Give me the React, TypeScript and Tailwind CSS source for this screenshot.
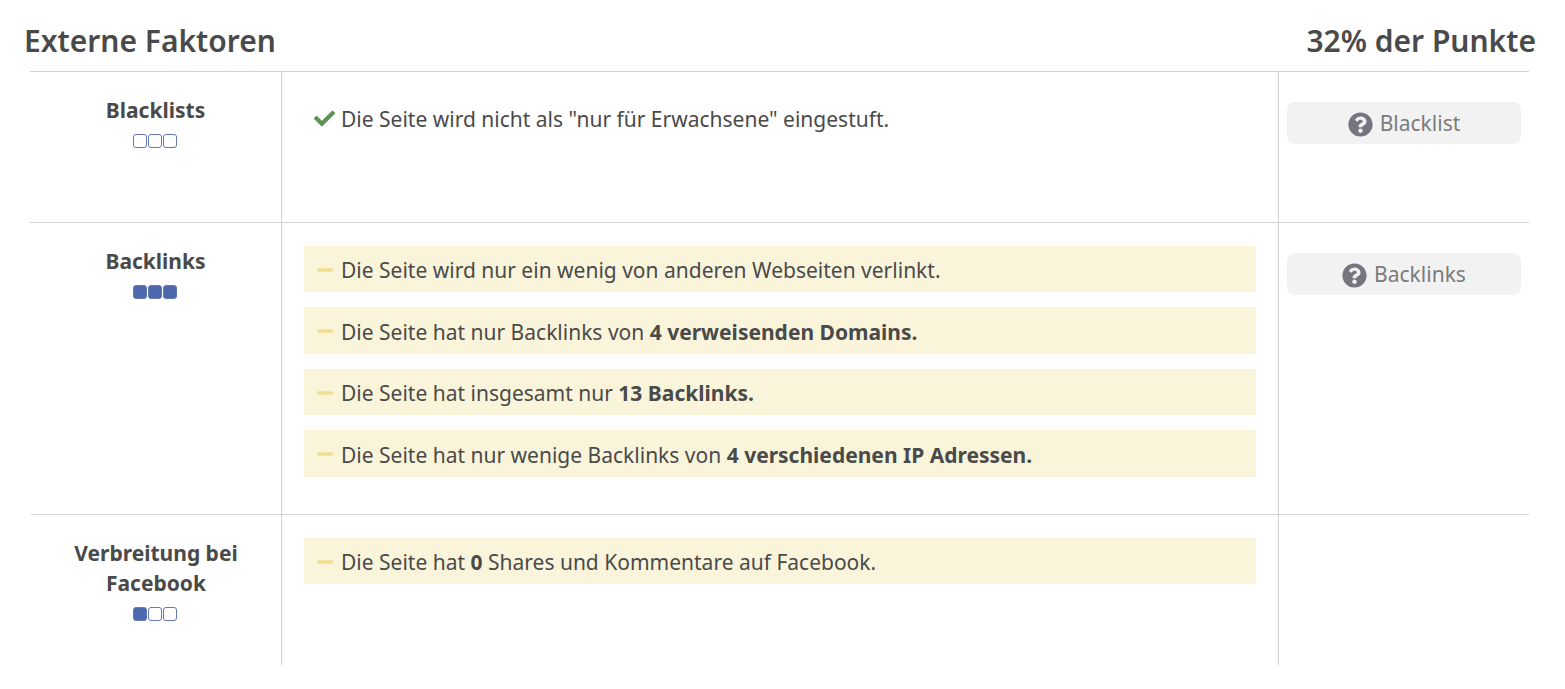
import { FaCheck, FaMinus, FaQuestionCircle } from 'react-icons/fa';

// Bewertungsquadrate unter dem Faktornamen
function Rating({ filled }: { filled: number }) {
  return (
    <div className="flex justify-center gap-px mt-[9px] -translate-x-px">
      {[0, 1, 2].map((i) => (
        <span
          key={i}
          className={`w-[14px] h-[14px] rounded-[3px] border border-[#6079b5] ${i < filled ? 'bg-[#4d69ae]' : 'bg-white'}`}
        />
      ))}
    </div>
  );
}

function Warning({ children }: { children: React.ReactNode }) {
  return (
    <div className="flex items-center h-[46.5px] mb-[15px] bg-[#faf5da] pl-[12px] text-[21px] text-[#4a4a4a]">
      <FaMinus className="w-[18px] h-[18px] mr-[7px] text-[#f0e08e] translate-y-px shrink-0" />
      <span className="translate-y-[1.5px]">{children}</span>
    </div>
  );
}

function HelpButton({ label }: { label: string }) {
  return (
    <div className="flex items-center justify-center h-[42px] ml-2 mr-2 mt-[30px] rounded-lg bg-[#f2f2f3] text-[21px] text-[#7b7b7b]">
      <FaQuestionCircle className="w-[25px] h-[25px] mr-[7px] text-[#757580] translate-y-px shrink-0" />
      <span className="translate-y-px">{label}</span>
    </div>
  );
}

function Row({
  title,
  filled,
  height,
  children,
  help,
}: {
  title: React.ReactNode;
  filled: number;
  height: string;
  children: React.ReactNode;
  help?: string;
}) {
  return (
    <div className={`grid grid-cols-[252px_997px_1fr] last:grid-cols-[251px_997px_1fr] last:ml-px ${height} border-t border-[#d2d2d2]`}>
      <div className="border-r border-[#d2d2d2] pt-[23px] text-center text-[21px] leading-[30px] font-bold text-[#4a4a4a]">
        {title}
        <Rating filled={filled} />
      </div>
      <div className="border-r border-[#d2d2d2] pt-[22.7px] pl-[22px] pr-[22px]">{children}</div>
      <div>{help && <HelpButton label={help} />}</div>
    </div>
  );
}

export default function App() {
  return (
    <div className="w-[1565px] h-[689px] bg-white overflow-hidden font-['Noto_Sans',sans-serif]">
      <div className="flex justify-between items-center h-[71px] pl-[24px] pr-[29px] pt-[9px] text-[30px] font-semibold text-[#4a4a4a]">
        <span>Externe Faktoren</span>
        <span>32% der Punkte</span>
      </div>
      <div className="ml-[30px] w-[1499px]">
        <Row title="Blacklists" filled={0} height="h-[151px]" help="Blacklist">
          <div className="flex items-center h-[46px] pl-[10px] mt-[2px] text-[21px] text-[#4a4a4a]">
            <FaCheck className="w-[21px] h-[21px] mr-[6px] text-[#5f9254] -translate-y-[1px] shrink-0" />
            <span>Die Seite wird nicht als "nur für Erwachsene" eingestuft.</span>
          </div>
        </Row>
        <Row title="Backlinks" filled={3} height="h-[292px]" help="Backlinks">
          <Warning>Die Seite wird nur ein wenig von anderen Webseiten verlinkt.</Warning>
          <Warning>
            Die Seite hat nur Backlinks von <b className="font-bold">4 verweisenden Domains.</b>
          </Warning>
          <Warning>
            Die Seite hat insgesamt nur <b className="font-bold">13 Backlinks.</b>
          </Warning>
          <Warning>
            Die Seite hat nur wenige Backlinks von <b className="font-bold">4 verschiedenen IP Adressen.</b>
          </Warning>
        </Row>
        <Row title={<>Verbreitung bei<br />Facebook</>} filled={1} height="h-[151px]">
          <Warning>
            Die Seite hat <b className="font-bold">0</b> Shares und Kommentare auf Facebook.
          </Warning>
        </Row>
      </div>
    </div>
  );
}
